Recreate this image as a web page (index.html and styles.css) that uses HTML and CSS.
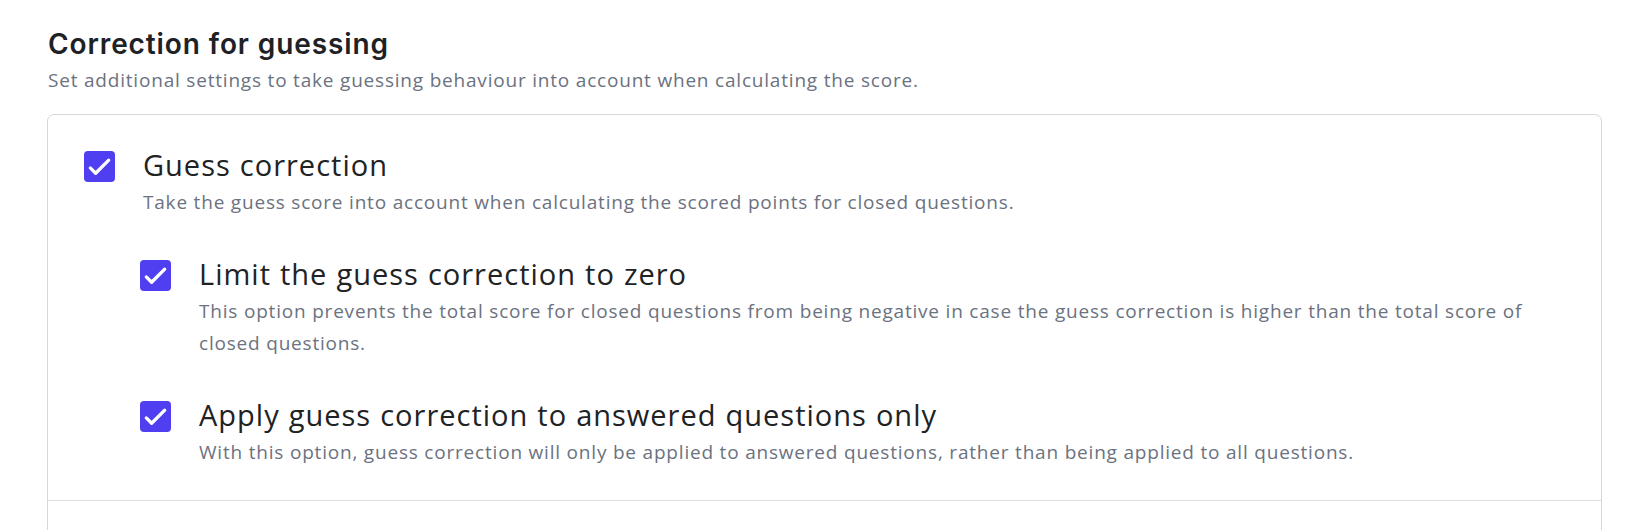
FILE: index.html
```html
<!DOCTYPE html>
<html lang="en">
<head>
<meta charset="utf-8">
<title>Correction for guessing</title>
<link rel="stylesheet" href="styles.css">
</head>
<body>
<main class="page">
  <h2 class="section-title">Correction for guessing</h2>
  <p class="section-sub">Set additional settings to take guessing behaviour into account when calculating the score.</p>
  <div class="card">
    <div class="card-section">
      <div class="option">
        <span class="checkbox"><svg viewBox="0 0 32 32"><polyline points="6.5,17.5 12,23 25.5,9.5"/></svg></span>
        <div class="option-body">
          <div class="option-title">Guess correction</div>
          <div class="option-desc">Take the guess score into account when calculating the scored points for closed questions.</div>
        </div>
      </div>
      <div class="option nested">
        <span class="checkbox"><svg viewBox="0 0 32 32"><polyline points="6.5,17.5 12,23 25.5,9.5"/></svg></span>
        <div class="option-body">
          <div class="option-title">Limit the guess correction to zero</div>
          <div class="option-desc">This option prevents the total score for closed questions from being negative in case the guess correction is higher than the total score of closed questions.</div>
        </div>
      </div>
      <div class="option nested">
        <span class="checkbox"><svg viewBox="0 0 32 32"><polyline points="6.5,17.5 12,23 25.5,9.5"/></svg></span>
        <div class="option-body">
          <div class="option-title">Apply guess correction to answered questions only</div>
          <div class="option-desc">With this option, guess correction will only be applied to answered questions, rather than being applied to all questions.</div>
        </div>
      </div>
    </div>
    <div class="card-section empty"></div>
  </div>
</main>
</body>
</html>
```

FILE: styles.css
```css
* { box-sizing: border-box; }
html, body { margin: 0; padding: 0; background: #ffffff; overflow: hidden; }
body { font-family: "Open Sans", "Noto Sans", sans-serif; color: #1f2328; }

.page {
  padding: 28px 40px 0 47px;
}

.section-title {
  margin: 0 0 0 1px;
  font-family: "Inter", "Open Sans", sans-serif;
  font-weight: 600;
  font-size: 28px;
  line-height: 32px;
  color: #1e2125;
  letter-spacing: 0.9px;
}

.section-sub {
  margin: 8px 0 0 1px;
  font-size: 19px;
  line-height: 24px;
  color: #6b7280;
  letter-spacing: 0.8px;
}

.card {
  margin-top: 22px;
  border: 1px solid #d4d7dc;
  border-radius: 7px;
}

.card-section {
  padding: 34px 36px 32px 36px;
  display: flex;
  flex-direction: column;
  gap: 39px;
}

.card-section + .card-section {
  border-top: 1px solid #dcdde0;
}

.card-section.empty {
  min-height: 40px;
}

.option {
  display: flex;
  align-items: flex-start;
  gap: 28px;
}

.option.nested {
  margin-left: 56px;
}

.checkbox {
  flex: none;
  width: 31px;
  height: 31px;
  margin-top: 2px;
  border-radius: 4px;
  background: #4f3ff0;
  display: flex;
}

.checkbox svg {
  width: 31px;
  height: 31px;
}

.checkbox polyline {
  fill: none;
  stroke: #ffffff;
  stroke-width: 3.4;
  stroke-linecap: round;
  stroke-linejoin: round;
}

.option-body {
  display: flex;
  flex-direction: column;
  gap: 5px;
}

.option-title {
  font-size: 29px;
  line-height: 32px;
  color: #202224;
  letter-spacing: 1px;
  word-spacing: 0.5px;
}

.option-desc {
  font-size: 19px;
  line-height: 32.5px;
  color: #6b7280;
  letter-spacing: 0.8px;
}
```
